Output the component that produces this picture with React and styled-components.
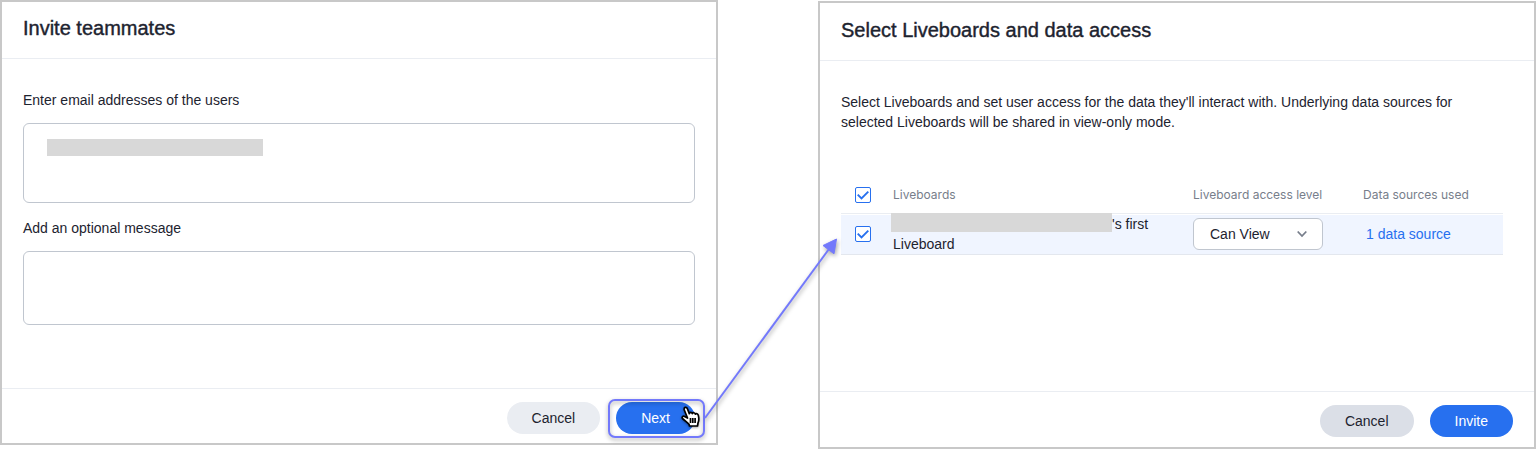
import React from "react";
import styled, { createGlobalStyle } from "styled-components";

const GlobalStyle = createGlobalStyle`
  * { box-sizing: border-box; }
  body {
    margin: 0;
    background: #fff;
    color: #1d232f;
    font-family: "Liberation Sans", Arial, sans-serif;
    font-size: 14px;
    line-height: 20px;
  }
`;

const Page = styled.main`
  display: grid;
  grid-template-columns: 1fr 1fr;
  column-gap: 100px;
  align-items: start;
`;

const Dialog = styled.section`
  display: flex;
  flex-direction: column;
  min-width: 0;
  margin-top: ${(p) => p.$top || 0}px;
  border: 2px solid #c8c8c8;
  background: #fff;
`;

const DialogHeader = styled.header`
  padding: ${(p) => p.$padTop || 14}px 21px 18px;
  border-bottom: 1px solid #eaedf2;
`;

const Title = styled.h2`
  margin: 0;
  font-size: 20px;
  line-height: 24px;
  font-weight: 400;
  -webkit-text-stroke: 0.4px currentColor;
`;

const DialogBody = styled.div`
  display: flex;
  flex-direction: column;
  padding: ${(p) => p.$pad};
`;

const Field = styled.div`
  display: flex;
  flex-direction: column;
  gap: 13px;
  position: relative;
  margin-bottom: 15px;
`;

const TextArea = styled.textarea`
  display: block;
  width: 100%;
  height: ${(p) => p.$height}px;
  padding: 14px 23px;
  border: 1px solid #c0c6cf;
  border-radius: 6px;
  background: #fff;
  color: inherit;
  font: inherit;
  resize: none;
  outline: none;
`;

const FieldRedaction = styled.span`
  position: absolute;
  left: 24px;
  top: 49px;
  width: 216px;
  height: 17px;
  background: #d8d8d8;
`;

const DialogFooter = styled.footer`
  display: flex;
  justify-content: flex-end;
  gap: 16px;
  padding: 13px 21px ${(p) => p.$padBottom || 9}px;
  border-top: 1px solid #eaedf2;
`;

const variants = {
  primary: "background: #2770ef; color: #fff;",
  light: "background: #eaedf2; color: #1d232f;",
  hovered: "background: #dbdfe7; color: #1d232f;",
};

const Button = styled.button`
  height: 32px;
  padding: 0 25px 1px;
  border: 0;
  border-radius: 16px;
  font: inherit;
  cursor: pointer;
  ${(p) => variants[p.$variant]}
`;

const Spotlight = styled.div`
  position: relative;
  display: flex;
`;

const SpotlightFrame = styled.span`
  position: absolute;
  inset: -3px -10px -4px -8px;
  border: 2px solid #7379fb;
  border-radius: 7px;
  filter: drop-shadow(0 2px 2px rgba(0, 0, 0, 0.35));
  pointer-events: none;
`;

const ArrowSvg = styled.svg`
  position: absolute;
  right: -155px;
  top: -172px;
  z-index: 2;
  filter: drop-shadow(1px 2px 2px rgba(0, 0, 0, 0.35));
  pointer-events: none;
`;

const CursorSvg = styled.svg`
  position: absolute;
  right: -6px;
  top: 4px;
  filter: drop-shadow(0 1px 1px rgba(0, 0, 0, 0.35));
  pointer-events: none;
`;

const Intro = styled.p`
  margin: 0 0 43px;
`;

const Table = styled.table`
  width: 100%;
  table-layout: fixed;
  border-collapse: separate;
  border-spacing: 0;
`;

const Col = styled.col`
  width: ${(p) => p.$width}px;
`;

const HeadCell = styled.th`
  height: 39px;
  padding: 1px 0 0;
  border-bottom: 1px solid #eaedf2;
  color: #777e8b;
  font-family: Inter, "Liberation Sans", sans-serif;
  font-size: 12px;
  font-weight: 400;
  text-align: left;
`;

const Cell = styled.td`
  height: 41px;
  padding: 0;
  border-bottom: 1px solid #e3e7ee;
  background: #f0f5ff;
  box-shadow: inset 0 1px #fff;
`;

const CheckWrap = styled.label`
  position: relative;
  display: block;
  width: 16px;
  height: 16px;
  margin-left: 14px;
`;

const CheckInput = styled.input`
  appearance: none;
  display: block;
  width: 16px;
  height: 16px;
  margin: 0;
  border: 1px solid #2770ef;
  border-radius: 2px;
  background: #fff;
`;

const CheckMark = styled.svg`
  position: absolute;
  inset: 0;
  pointer-events: none;
`;

const NameRedaction = styled.span`
  display: inline-block;
  vertical-align: top;
  width: 221px;
  height: 19px;
  margin: -1px 0 1px -2px;
  background: #d8d8d8;
`;

const SelectWrap = styled.div`
  position: relative;
  width: 130px;
`;

const Select = styled.select`
  appearance: none;
  display: block;
  width: 100%;
  height: 32px;
  padding: 0 30px 0 16px;
  border: 1px solid #c0c6cf;
  border-radius: 6px;
  background: #fff;
  color: inherit;
  font: inherit;
`;

const Chevron = styled.svg`
  position: absolute;
  right: 16px;
  top: 11px;
  pointer-events: none;
`;

const SourceLink = styled.a`
  padding-left: 3px;
  color: #2770ef;
  text-decoration: none;
`;

function Checkbox({ label }) {
  return (
    <CheckWrap>
      <CheckInput type="checkbox" defaultChecked aria-label={label} />
      <CheckMark width="16" height="16" viewBox="0 0 16 16" fill="none" aria-hidden="true">
        <path d="M2.700 7.600 L6.500 11.400 L13.300 4.600" stroke="#2770ef" strokeWidth="1.900" />
      </CheckMark>
    </CheckWrap>
  );
}

function ConnectorArrow() {
  return (
    <ArrowSvg width="150" height="200" viewBox="0 0 150 200" fill="none" aria-hidden="true">
      <path d="M5 188 L129 19" stroke="#7379fb" strokeWidth="2" />
      <path d="M136.500 9 L123 15.500 L134 23.800 Z" fill="#7379fb" stroke="#7379fb" />
    </ArrowSvg>
  );
}

function HandCursor() {
  return (
    <CursorSvg width="20" height="22" viewBox="0 0 20 22" aria-hidden="true">
      <path
        d="M6.500 12 L3.300 4 C2.500 1.200 5.500 .3 6.400 2.700 L8.300 7.600 C8.500 6 11 6 11.300 7.600 C11.800 6.200 14 6.500 14.300 8.100 C15.200 7 17 7.600 17.400 9.600 C18.100 12.600 18 15 17 17 L16.500 20 L8.500 20 L8 18.200 C6 16.700 4 14.500 1.700 12.800 C.3 11.300 1.800 9.400 3.600 10.400 Z"
        fill="#fff"
        stroke="#000"
        strokeWidth="1.700"
        strokeLinejoin="round"
      />
      <path d="M9.500 12 V17 M11.800 12 V17 M14.100 12 V17" stroke="#000" strokeWidth="1.700" />
    </CursorSvg>
  );
}

export default function App() {
  return (
    <>
      <GlobalStyle />
      <Page>
        <Dialog>
          <DialogHeader>
            <Title>Invite teammates</Title>
          </DialogHeader>
          <DialogBody $pad="31px 21px 48px">
            <Field>
              <label htmlFor="emails">Enter email addresses of the users</label>
              <TextArea id="emails" $height={80} />
              <FieldRedaction />
            </Field>
            <Field>
              <label htmlFor="message">Add an optional message</label>
              <TextArea id="message" $height={74} />
            </Field>
          </DialogBody>
          <DialogFooter>
            <Button type="button" $variant="light">Cancel</Button>
            <Spotlight>
              <Button type="button" $variant="primary">Next</Button>
              <SpotlightFrame />
              <ConnectorArrow />
              <HandCursor />
            </Spotlight>
          </DialogFooter>
        </Dialog>

        <Dialog $top={1}>
          <DialogHeader $padTop={15}>
            <Title>Select Liveboards and data access</Title>
          </DialogHeader>
          <DialogBody $pad="31px 31px 136px 21px">
            <Intro>
              Select Liveboards and set user access for the data they'll interact with. Underlying data
              sources for selected Liveboards will be shared in view-only mode.
            </Intro>
            <Table>
              <colgroup>
                <Col $width={52} />
                <col />
                <Col $width={170} />
                <Col $width={140} />
              </colgroup>
              <thead>
                <tr>
                  <HeadCell scope="col"><Checkbox label="Select all Liveboards" /></HeadCell>
                  <HeadCell scope="col">Liveboards</HeadCell>
                  <HeadCell scope="col">Liveboard access level</HeadCell>
                  <HeadCell scope="col">Data sources used</HeadCell>
                </tr>
              </thead>
              <tbody>
                <tr>
                  <Cell><Checkbox label="Select Liveboard" /></Cell>
                  <Cell>
                    <NameRedaction />'s first Liveboard
                  </Cell>
                  <Cell>
                    <SelectWrap>
                      <Select aria-label="Liveboard access level" defaultValue="view">
                        <option value="view">Can View</option>
                        <option value="edit">Can Edit</option>
                      </Select>
                      <Chevron width="10" height="10" viewBox="0 0 10 10" fill="none" aria-hidden="true">
                        <path d="M.7 2.500 L5 7 L9.300 2.500" stroke="#777e8b" strokeWidth="1.800" />
                      </Chevron>
                    </SelectWrap>
                  </Cell>
                  <Cell><SourceLink href="#sources">1 data source</SourceLink></Cell>
                </tr>
              </tbody>
            </Table>
          </DialogBody>
          <DialogFooter $padBottom={10}>
            <Button type="button" $variant="hovered">Cancel</Button>
            <Button type="button" $variant="primary">Invite</Button>
          </DialogFooter>
        </Dialog>
      </Page>
    </>
  );
}
